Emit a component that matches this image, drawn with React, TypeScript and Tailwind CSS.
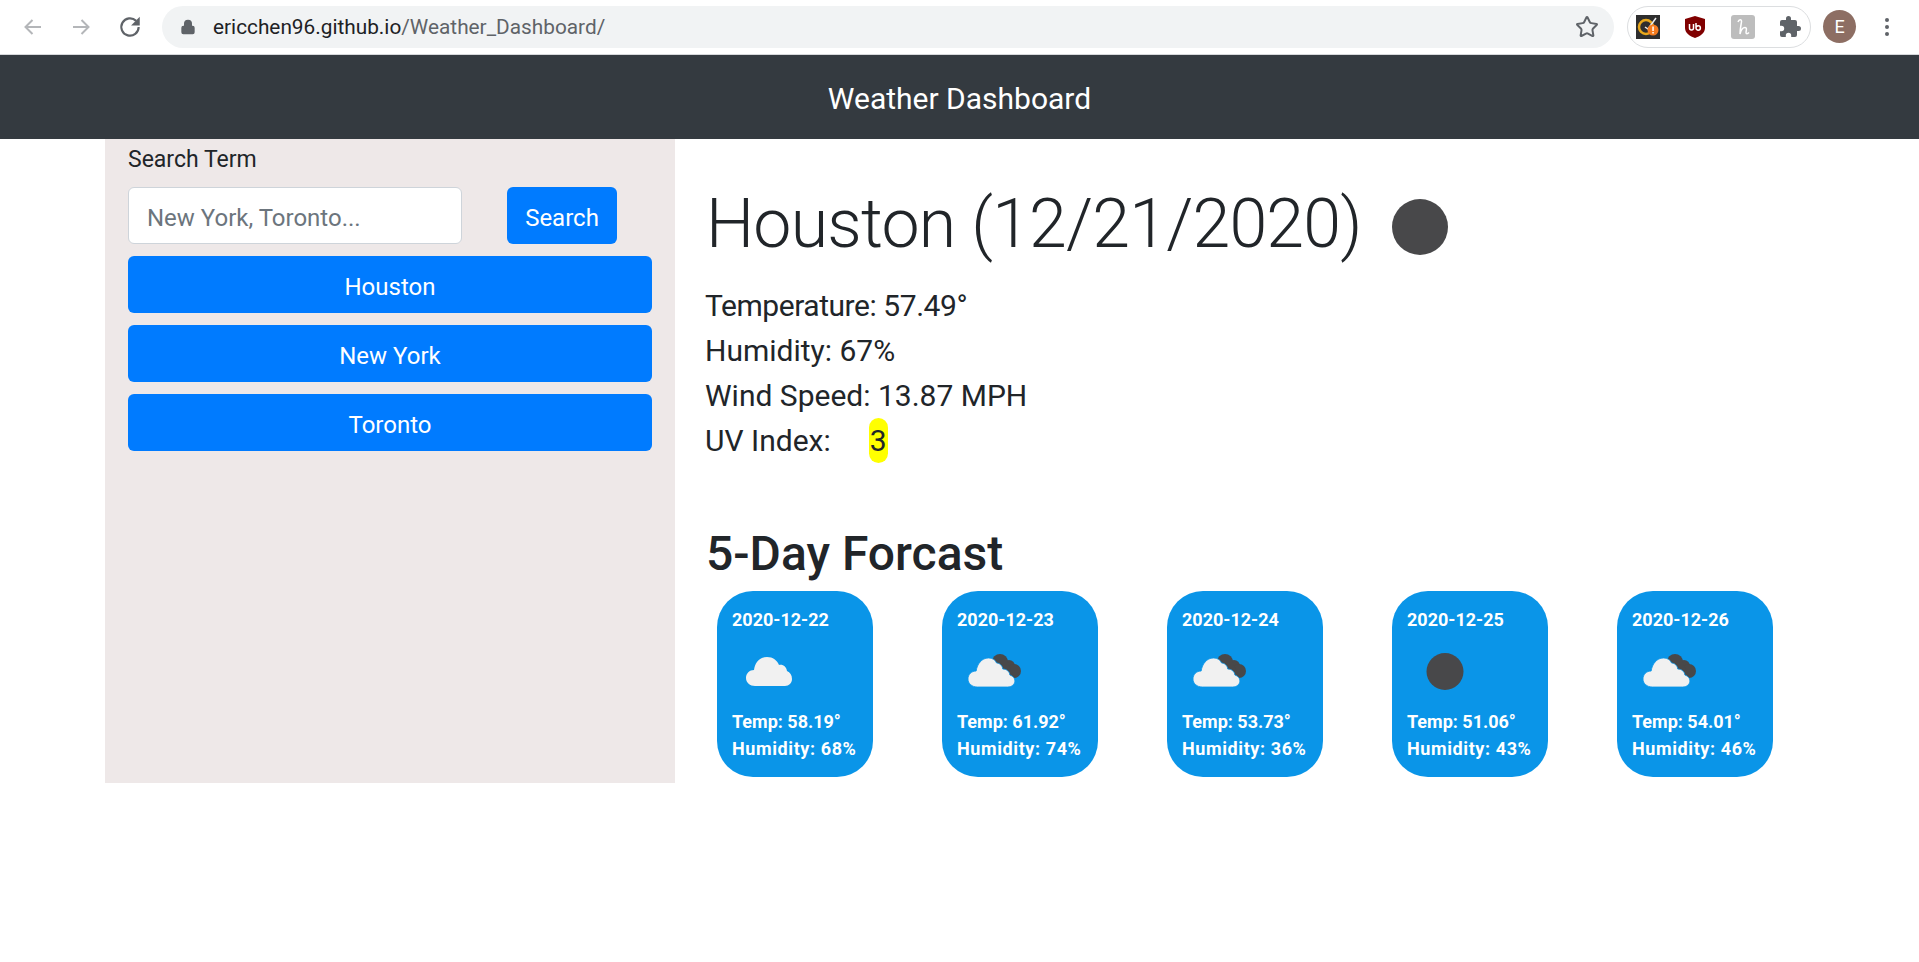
import { Star, Lock } from "lucide-react";

const FONT = "font-['Roboto','Noto_Sans',sans-serif]";

const forecast = [
  { date: "2020-12-22", temp: "58.19", humidity: "68", icon: "cloud" },
  { date: "2020-12-23", temp: "61.92", humidity: "74", icon: "both" },
  { date: "2020-12-24", temp: "53.73", humidity: "36", icon: "both" },
  { date: "2020-12-25", temp: "51.06", humidity: "43", icon: "moon" },
  { date: "2020-12-26", temp: "54.01", humidity: "46", icon: "both" },
];

// 46x29 cloud outlines: plain, and the one that sits in front of the dark cloud
const CLOUD =
  "M9 29C4 29 0 25.500 0 21 0 16.500 3.500 13 8 13 9 6 13.500 0 21 0 27 0 31 3.500 33 8 37 7 40.500 10 41 14 44 15.500 46 18 46 22 46 26 43 29 39 29Z";
const CLOUD_FRONT =
  "M9 29C4 29 0 25.500 0 21 0 16.500 3.500 13 8 13 9 6 13.500 0 20 0 24 0 27 2 28 5 31 5 34 8 34 11 38 11 41 14 41 17 44 18 46 20 46 23 46 26 43 29 39 29Z";

function WeatherIcon({ icon }: { icon: string }) {
  return (
    <svg width="60" height="60" viewBox="0 0 60 60">
      {icon === "moon" && <circle cx="32" cy="31.500" r="18.500" fill="#48484a" />}
      {icon === "cloud" && (
        <g transform="translate(8 17)">
          <path d={CLOUD} fill="#f1f1f1" />
        </g>
      )}
      {icon === "both" && (
        <>
          <circle cx="37" cy="22" r="8" fill="#48484a" />
          <circle cx="46" cy="26" r="6" fill="#48484a" />
          <circle cx="51" cy="31" r="7" fill="#48484a" />
          <path d="M30 20h14l7 18h-12z" fill="#48484a" />
          <g transform="translate(5 18) scale(1.02 1)">
            <path d={CLOUD_FRONT} fill="#f1f1f1" stroke="#0a95e8" strokeWidth="0.8" />
          </g>
        </>
      )}
    </svg>
  );
}

function ForecastCard({ item }: { item: (typeof forecast)[number] }) {
  return (
    <div className="flex h-[186px] w-[156px] flex-col rounded-[36px] bg-[#0a95e8] px-[15px] pt-[15px] text-[18px] leading-[27px] font-bold text-white">
      <div>{item.date}</div>
      <div className="mt-[7px] mb-[8px] pl-[6px]">
        <WeatherIcon icon={item.icon} />
      </div>
      <div>Temp: {item.temp}°</div>
      <div className="tracking-[0.6px]">Humidity: {item.humidity}%</div>
    </div>
  );
}

function BrowserBar() {
  return (
    <div className="flex h-[55px] items-center border-b border-[#d6d8db] bg-white pb-[1px]">
      <div className="flex w-[162px] items-center pl-[21px]">
        <svg width="24" height="24" viewBox="0 0 24 24" className="mr-[24px]">
          <path d="M20 12H5M11.500 5 4.500 12l7 7" fill="none" stroke="#b4b6b9" strokeWidth="2" />
        </svg>
        <svg width="24" height="24" viewBox="0 0 24 24" className="mr-[24px]">
          <path d="M4 12h15M12.500 5l7 7-7 7" fill="none" stroke="#b4b6b9" strokeWidth="2" />
        </svg>
        <svg width="26" height="26" viewBox="0 0 24 24">
          <path
            d="M20 12a8 8 0 1 1-2.340-5.660"
            fill="none"
            stroke="#5f6368"
            strokeWidth="2"
          />
          <path d="M21 2.500v8h-8z" fill="#5f6368" />
        </svg>
      </div>
      <div className="flex h-[42px] w-[1452px] items-center rounded-full bg-[#f1f3f4] pr-[15px] pl-[18px]">
        <Lock size={16} className="mr-[17px] text-[#5f6368]" fill="#5f6368" />
        <div className="flex-1 pt-[2px] text-[20.8px] text-[#5f6368]">
          <span className="text-[#202124]">ericchen96.github.io</span>/Weather_Dashboard/
        </div>
        <Star size={24} className="text-[#5f6368]" strokeWidth={2} />
      </div>
      <div className="ml-[13px] flex h-[42px] w-[184px] items-center justify-between rounded-full border border-[#dcdee0] px-[8px]">
        <svg width="24" height="24" viewBox="0 0 24 24">
          <rect width="24" height="24" fill="#2e2e2e" />
          <circle cx="10" cy="12" r="7" fill="none" stroke="#e8a81c" strokeWidth="2.500" />
          <path d="M9 12l3 2 8-11" fill="none" stroke="#eee" strokeWidth="1.500" />
          <circle cx="17" cy="15" r="5.500" fill="#f57c1f" />
          <rect x="16.300" y="11.500" width="1.500" height="4.500" fill="#fff" />
          <rect x="16.300" y="17" width="1.500" height="1.500" fill="#fff" />
        </svg>
        <svg width="24" height="24" viewBox="0 0 24 24">
          <path d="M12 1l10 3v9c0 5-5 8.500-10 10C7 21.500 2 18 2 13V4z" fill="#800000" />
          <path
            d="M6.500 9v4a2 2 0 0 0 4 0V9M13 8v5a2.200 2.200 0 1 0 4.400 0 2.200 2.200 0 1 0-4.400 0"
            fill="none"
            stroke="#fff"
            strokeWidth="1.500"
          />
        </svg>
        <svg width="24" height="24" viewBox="0 0 24 24">
          <rect width="24" height="24" rx="3" fill="#bdbdbd" />
          <path
            d="M7 7c1-3 4-3 3.500 0-.5 3-1.500 7-1.500 12 1-4 3-6.500 5-6.500 2.500 0 1 3.500 1 5s1.500 1.500 3 0"
            fill="none"
            stroke="#fff"
            strokeWidth="1.500"
          />
        </svg>
        <svg width="24" height="24" viewBox="0 0 24 24">
          <path
            d="M20.500 11H19V7a2 2 0 0 0-2-2h-4V3.500a2.500 2.500 0 0 0-5 0V5H4a2 2 0 0 0-2 2v3.800h1.500a2.700 2.700 0 0 1 0 5.400H2V20a2 2 0 0 0 2 2h3.800v-1.500a2.700 2.700 0 0 1 5.400 0V22H17a2 2 0 0 0 2-2v-4h1.500a2.500 2.500 0 0 0 0-5z"
            fill="#5f6368"
          />
        </svg>
      </div>
      <div className="ml-[12px] flex h-[33px] w-[33px] items-center justify-center rounded-full bg-[#8d6e63] text-[18px] text-white">
        E
      </div>
      <div className="ml-[29px] flex flex-col gap-[3px]">
        <div className="h-[4px] w-[4px] rounded-full bg-[#5f6368]" />
        <div className="h-[4px] w-[4px] rounded-full bg-[#5f6368]" />
        <div className="h-[4px] w-[4px] rounded-full bg-[#5f6368]" />
      </div>
    </div>
  );
}

export default function App() {
  return (
    <div className={`min-h-[962px] bg-white text-[#212529] ${FONT}`}>
      <BrowserBar />
      <div className="flex h-[84px] items-center justify-center bg-[#343a40] pt-[2px] text-[30px] text-white">
        Weather Dashboard
      </div>

      <div className="ml-[105px] flex">
        {/* Sidebar */}
        <div className="h-[644px] w-[570px] bg-[#eee8e8] px-[23px] pt-[3px]">
          <div className="text-[23px] leading-[36px]">Search Term</div>
          <div className="mt-[9px] flex justify-between pr-[35px]">
            <input
              placeholder="New York, Toronto..."
              className="h-[57px] w-[334px] rounded-[6px] border border-[#ced4da] bg-white px-[18px] pt-[4px] text-[24px] placeholder:text-[#6c757d]"
            />
            <button className="h-[57px] w-[110px] rounded-[6px] bg-[#007bff] pt-[4px] text-[24px] text-white">
              Search
            </button>
          </div>
          <div className="mt-[12px] flex flex-col gap-[12px]">
            {["Houston", "New York", "Toronto"].map((city) => (
              <button
                key={city}
                className="h-[57px] w-full rounded-[6px] bg-[#007bff] pt-[4px] text-[24px] text-white"
              >
                {city}
              </button>
            ))}
          </div>
        </div>

        {/* Main */}
        <div className="flex-1 pt-[30px] pl-[31px]">
          <div className="flex items-center">
            <h1 className="pt-[2px] text-[68px] leading-[106px] font-light tracking-[-0.77px]">
              Houston (12/21/2020)
            </h1>
            <div className="mt-[7px] ml-[30px] h-[56px] w-[56px] rounded-full bg-[#48484a]" />
          </div>
          <div className="mt-[6px] -ml-[1px] text-[30px] leading-[45px]">
            <div className="tracking-[-0.45px]">Temperature: 57.49°</div>
            <div>Humidity: 67%</div>
            <div>Wind Speed: 13.87 MPH</div>
            <div>
              UV Index:
              <span className="ml-[38px] inline-block rounded-[10px] bg-[#ffff00] px-[1px]">3</span>
            </div>
          </div>
          <h2 className="mt-[62px] text-[48px] leading-[58px] font-medium">5-Day Forcast</h2>
          <div className="mt-[8px] flex gap-[69px] pl-[11px]">
            {forecast.map((item) => (
              <ForecastCard key={item.date} item={item} />
            ))}
          </div>
        </div>
      </div>
    </div>
  );
}
